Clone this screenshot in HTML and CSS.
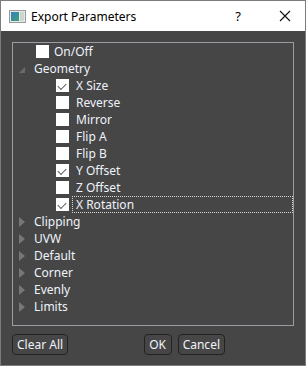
FILE: index.html
```html
<!DOCTYPE html>
<html lang="en">
<head>
  <meta charset="UTF-8">
  <title>Export Parameters</title>
  <link rel="stylesheet" href="styles.css">
</head>
<body>
  <div class="window">
    <div class="titlebar">
      <svg class="app-icon" width="17" height="13" viewBox="0 0 17 13">
        <defs>
          <linearGradient id="g" x1="0" y1="0" x2="1" y2="1">
            <stop offset="0" stop-color="#3a7fc0"/>
            <stop offset="1" stop-color="#3aa070"/>
          </linearGradient>
        </defs>
        <rect x="0.5" y="0.5" width="16" height="12" fill="#e8e8e8" stroke="#9a9a9a"/>
        <rect x="2" y="2" width="8" height="9" fill="url(#g)"/>
        <rect x="11" y="2" width="4" height="9" fill="#c8d8d0"/>
      </svg>
      <span class="title">Export Parameters</span>
      <span class="help">?</span>
      <svg class="close" width="12" height="12" viewBox="0 0 12 12">
        <path d="M1 1 L11 11 M11 1 L1 11" stroke="#111" stroke-width="1.1"/>
      </svg>
    </div>

    <div class="content">
      <div class="tree">
        <div class="row top">
          <span class="box"></span><span class="label">On/Off</span>
        </div>
        <div class="row group">
          <span class="arrow open"></span><span class="label">Geometry</span>
        </div>
        <div class="row child">
          <span class="box checked"></span><span class="label">X Size</span>
        </div>
        <div class="row child">
          <span class="box"></span><span class="label">Reverse</span>
        </div>
        <div class="row child">
          <span class="box"></span><span class="label">Mirror</span>
        </div>
        <div class="row child">
          <span class="box"></span><span class="label">Flip A</span>
        </div>
        <div class="row child">
          <span class="box"></span><span class="label">Flip B</span>
        </div>
        <div class="row child">
          <span class="box checked"></span><span class="label">Y Offset</span>
        </div>
        <div class="row child">
          <span class="box"></span><span class="label">Z Offset</span>
        </div>
        <div class="row child">
          <span class="box checked"></span><span class="label focus">X Rotation</span>
        </div>
        <div class="row group">
          <span class="arrow"></span><span class="label">Clipping</span>
        </div>
        <div class="row group">
          <span class="arrow"></span><span class="label">UVW</span>
        </div>
        <div class="row group">
          <span class="arrow"></span><span class="label">Default</span>
        </div>
        <div class="row group">
          <span class="arrow"></span><span class="label">Corner</span>
        </div>
        <div class="row group">
          <span class="arrow"></span><span class="label">Evenly</span>
        </div>
        <div class="row group">
          <span class="arrow"></span><span class="label">Limits</span>
        </div>
      </div>

      <div class="buttons">
        <button class="btn">Clear All</button>
        <div class="spacer"></div>
        <button class="btn ok">OK</button>
        <button class="btn">Cancel</button>
        <div class="right-space"></div>
      </div>
    </div>
  </div>
</body>
</html>
```

FILE: styles.css
```css
body {
  margin: 0;
  padding: 0;
  font-family: "Noto Sans", "Open Sans", sans-serif;
  font-size: 12px;
}
.window {
  width: 306px;
  height: 366px;
  box-sizing: border-box;
  border: 1px solid #7c7c7c;
  background: #464646;
  display: flex;
  flex-direction: column;
}
.titlebar {
  height: 30px;
  background: #fff;
  display: flex;
  align-items: center;
  color: #000;
}
.app-icon {
  margin-left: 8px;
  margin-top: 1px;
}
.title {
  margin-left: 5px;
  font-size: 12px;
}
.help {
  margin-left: auto;
  font-size: 13px;
  margin-right: 38px;
}
.close {
  margin-right: 14px;
}
.content {
  flex: 1;
  padding: 11px 11px 0 11px;
  display: flex;
  flex-direction: column;
}
.tree {
  height: 284px;
  box-sizing: border-box;
  border: 1px solid #9c9ca4;
  color: #eef3fb;
}
.row {
  height: 17px;
  display: flex;
  align-items: center;
}
.box {
  width: 13px;
  height: 13px;
  background: #fff;
  flex: none;
  position: relative;
}
.box.checked::after {
  content: "";
  position: absolute;
  left: 3px;
  top: 1px;
  width: 7px;
  height: 4px;
  border-left: 1.2px solid #5a5a5a;
  border-bottom: 1.2px solid #5a5a5a;
  transform: translate(-1px, 3px) rotate(-45deg);
  transform-origin: 50% 50%;
}
.top {
  padding-left: 23px;
}
.top .label {
  margin-left: 5px;
}
.group {
  padding-left: 6px;
}
.group .label {
  margin-left: 9px;
}
.child {
  padding-left: 43px;
}
.child .label {
  margin-left: 3px;
  padding-left: 3px;
  flex: 1;
  height: 17px;
  line-height: 16px;
  box-sizing: border-box;
  border: 1px solid transparent;
}
.label {
  line-height: 17px;
  white-space: nowrap;
}
.child .label.focus {
  border: 1px dotted #d8d8d8;
  border-radius: 1px;
}
.arrow {
  width: 0;
  height: 0;
  border-top: 5px solid transparent;
  border-bottom: 5px solid transparent;
  border-left: 6px solid #777;
  flex: none;
}
.arrow.open {
  border-top: none;
  border-left: 6px solid transparent;
  border-bottom: 6px solid #6a6a6a;
  margin-top: 2px;
}
.buttons {
  display: flex;
  margin-top: 8px;
}
.btn {
  height: 21px;
  padding: 0 4px;
  font-family: "Noto Sans", "Open Sans", sans-serif;
  font-size: 12px;
  color: #eef3fb;
  background: #464646;
  border: 1px solid #222;
  border-radius: 4px;
  margin-right: 6px;
}
.btn.ok {
  width: 28px;
  padding: 0;
}
.spacer {
  flex: 1;
}
.right-space {
  width: 63px;
}
```
